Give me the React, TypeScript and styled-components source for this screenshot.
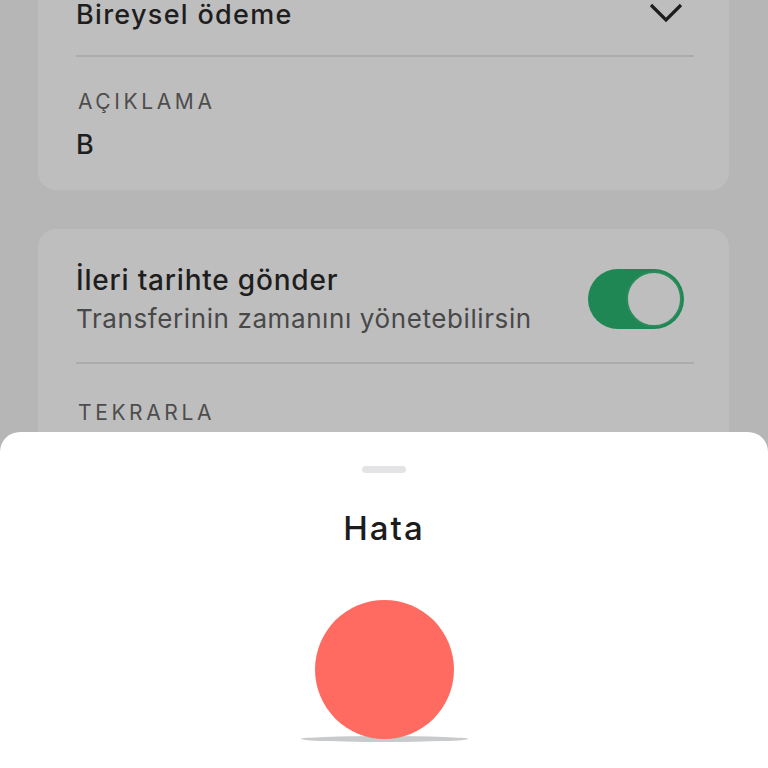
import React from "react";
import styled, { createGlobalStyle } from "styled-components";

const GlobalStyle = createGlobalStyle`
  html, body {
    margin: 0;
    padding: 0;
    background: #b6b6b7;
    overflow: hidden;
  }
  body {
    font-family: Inter, "Liberation Sans", sans-serif;
  }
`;

const Page = styled.div`
  display: flex;
  flex-direction: column;
  gap: 39px;
  padding: 0 39px 0 38px;
  margin-top: -30px;
  height: 798px;
`;

const Card = styled.div`
  background: #bebebe;
  border-radius: 18px;
  padding: 0 35px 0 38px;
  display: flex;
  flex-direction: column;
`;

const SelectRow = styled.div`
  height: 85px;
  display: flex;
  align-items: center;
  justify-content: space-between;
  border-bottom: 2px solid #acacac;
`;

const SelectText = styled.span`
  font-family: Inter, "Liberation Sans", sans-serif;
  font-size: 27px;
  line-height: 32px;
  font-weight: 500;
  letter-spacing: 1.3px;
  margin-top: 4px;
  color: #1e1e1e;
`;

const Chevron = styled.svg`
  width: 34px;
  height: 24px;
  margin-right: 11px;
`;

const Field = styled.div<{ $top: number; $bottom: number }>`
  display: flex;
  flex-direction: column;
  gap: 14px;
  padding-top: ${(p) => p.$top}px;
  padding-bottom: ${(p) => p.$bottom}px;
`;

const Label = styled.span`
  font-family: Inter, "Liberation Sans", sans-serif;
  font-size: 21px;
  line-height: 26px;
  letter-spacing: 3.6px;
  color: #4d4d4d;
  padding-left: 2px;
`;

const Value = styled.span`
  font-family: Inter, "Liberation Sans", sans-serif;
  font-size: 27px;
  line-height: 32px;
  font-weight: 500;
  color: #1e1e1e;
`;

const ToggleRow = styled.div`
  display: flex;
  align-items: center;
  justify-content: space-between;
  padding: 34px 10px 28px 0;
  border-bottom: 2px solid #acacac;
`;

const TextBlock = styled.div`
  display: flex;
  flex-direction: column;
  gap: 7px;
`;

const Title = styled.span`
  font-family: Inter, "Noto Sans", sans-serif;
  font-size: 28px;
  line-height: 34px;
  font-weight: 500;
  letter-spacing: 0.8px;
  color: #1e1e1e;
`;

const Subtitle = styled.span`
  font-family: Inter, "Noto Sans", sans-serif;
  font-size: 26px;
  line-height: 30px;
  letter-spacing: 0.6px;
  color: #484848;
`;

const Track = styled.div<{ $on: boolean }>`
  width: 96px;
  height: 60px;
  border-radius: 30px;
  background: ${(p) => (p.$on ? "#1f8753" : "#a0a0a0")};
  display: flex;
  align-items: center;
  justify-content: ${(p) => (p.$on ? "flex-end" : "flex-start")};
  padding: 0 2px;
  box-sizing: border-box;
`;

const Knob = styled.div`
  width: 56px;
  height: 56px;
  border-radius: 50%;
  background: #bebebe;
  border: 2px solid #2a8c5a;
  box-sizing: border-box;
`;

const Sheet = styled.div`
  position: fixed;
  left: 0;
  right: 0;
  top: 432px;
  bottom: 0;
  background: #ffffff;
  border-radius: 20px 20px 0 0;
  display: flex;
  flex-direction: column;
  align-items: center;
  padding-top: 34px;
`;

const Handle = styled.div`
  width: 44px;
  height: 7px;
  border-radius: 4px;
  background: #e4e4e6;
`;

const SheetTitle = styled.h2`
  margin: 35px 0 0;
  font-family: Inter, "Noto Sans", sans-serif;
  font-size: 33px;
  line-height: 40px;
  font-weight: 500;
  letter-spacing: 2px;
  color: #1c1c1c;
`;

const Ball = styled.div`
  position: relative;
  margin-top: 52px;
  width: 139px;
  height: 139px;
  &::after {
    content: "";
    position: absolute;
    left: -14px;
    right: -14px;
    bottom: -3px;
    height: 6px;
    border-radius: 50%;
    background: #c9cacb;
  }
`;

const BallFace = styled.div`
  position: relative;
  z-index: 1;
  width: 100%;
  height: 100%;
  border-radius: 50%;
  background: #ff6b61;
`;

export default function App() {
  return (
    <>
      <GlobalStyle />
      <Page>
        <Card>
          <SelectRow>
            <SelectText>Bireysel ödeme</SelectText>
            <Chevron viewBox="0 0 34 24">
              <polyline
                points="2,4 17,19 32,4"
                fill="none"
                stroke="#1e1e1e"
                strokeWidth="3.2"
              />
            </Chevron>
          </SelectRow>
          <Field $top={32} $bottom={29}>
            <Label>AÇIKLAMA</Label>
            <Value>B</Value>
          </Field>
        </Card>
        <Card>
          <ToggleRow>
            <TextBlock>
              <Title>İleri tarihte gönder</Title>
              <Subtitle>Transferinin zamanını yönetebilirsin</Subtitle>
            </TextBlock>
            <Track $on>
              <Knob />
            </Track>
          </ToggleRow>
          <Field $top={36} $bottom={60}>
            <Label>TEKRARLA</Label>
            <Value>Tek sefer</Value>
          </Field>
        </Card>
      </Page>
      <Sheet>
        <Handle />
        <SheetTitle>Hata</SheetTitle>
        <Ball>
          <BallFace />
        </Ball>
      </Sheet>
    </>
  );
}
